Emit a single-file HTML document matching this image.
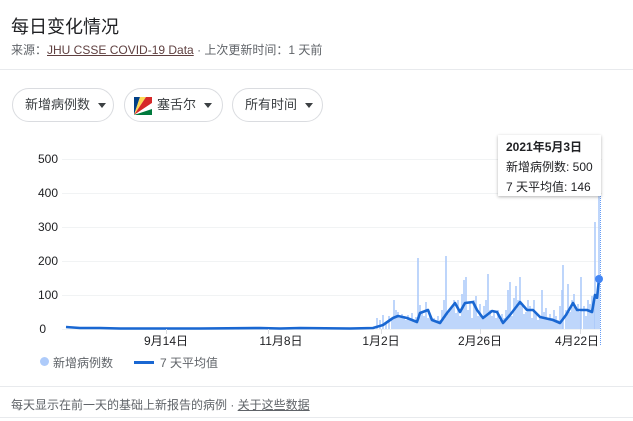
<!DOCTYPE html>
<html><head><meta charset="utf-8"><style>
body{margin:0;width:633px;height:421px;background:#fff;font-family:"Liberation Sans","Noto Sans CJK SC",sans-serif;color:#202124;position:relative;overflow:hidden}
.a{position:absolute;white-space:nowrap}
.chip{position:absolute;top:88px;height:32px;border:1px solid #dadce0;border-radius:17px;font-size:13px;line-height:32px;color:#3c4043}
.tri{display:inline-block;width:0;height:0;border-left:4px solid transparent;border-right:4px solid transparent;border-top:5px solid #3c4043;vertical-align:middle;margin-left:8px}
</style></head><body>
<div class="a" style="left:11px;top:13px;font-size:18px">每日变化情况</div>
<div class="a" style="left:11px;top:41px;font-size:12px;color:#5f6368">来源：<span style="color:#70757a;text-decoration:underline;color:#5f4040">JHU CSSE COVID-19 Data</span> · 上次更新时间：1 天前</div>
<div class="a" style="left:0;top:69px;width:633px;height:1px;background:#e8eaed"></div>
<div class="chip" style="left:12px;width:100px"><span style="margin-left:12px">新增病例数</span><span class="tri"></span></div>
<div class="chip" style="left:124px;width:97px"><svg style="position:absolute;left:9px;top:8px" width="18" height="18" viewBox="0 0 18 18"><polygon points="0,18 0,0 6,0" fill="#003f87"/><polygon points="0,18 6,0 12,0" fill="#fcd856"/><polygon points="0,18 12,0 18,0 18,6" fill="#d62828"/><polygon points="0,18 18,6 18,12" fill="#fff"/><polygon points="0,18 18,12 18,18" fill="#007a3d"/></svg><span style="margin-left:32px">塞舌尔</span><span class="tri"></span></div>
<div class="chip" style="left:232px;width:89px"><span style="margin-left:12px">所有时间</span><span class="tri"></span></div>

<svg class="a" style="left:0;top:0" width="633" height="421">
<g stroke="#f1f3f4" stroke-width="1"><line x1="62" x2="602" y1="159.5" y2="159.5"/><line x1="62" x2="602" y1="193.5" y2="193.5"/><line x1="62" x2="602" y1="227.5" y2="227.5"/><line x1="62" x2="602" y1="261.5" y2="261.5"/><line x1="62" x2="602" y1="295.5" y2="295.5"/><line x1="62" x2="602" y1="329.5" y2="329.5"/></g>
<g font-size="12" fill="#202124" text-anchor="end"><text x="58" y="163">500</text><text x="58" y="197">400</text><text x="58" y="231">300</text><text x="58" y="265">200</text><text x="58" y="299">100</text><text x="46" y="333">0</text></g>
<path stroke="#aecbfa" stroke-width="1.6" fill="none" d="M377 329V318M380 329V320M383 329V315M386 329V322M389 329V316M392 329V318M394 329V300M396 329V310M398 329V312M400 329V318M402 329V314M404 329V316M406 329V320M408 329V315M410 329V318M412 329V313M414 329V321M416 329V317M418 329V258M420 329V305M422 329V312M424 329V316M426 329V302M428 329V318M430 329V314M432 329V320M434 329V318M436 329V322M438 329V316M440 329V320M442 329V310M444 329V300M446 329V256M448 329V312M450 329V310M452 329V306M454 329V300M456 329V313M458 329V300M460 329V316M462 329V294M464 329V280M466 329V277M468 329V310M470 329V302M472 329V318M474 329V300M476 329V296M478 329V316M480 329V304M482 329V318M484 329V306M486 329V300M488 329V274M490 329V310M492 329V316M494 329V312M496 329V318M498 329V310M500 329V320M502 329V314M504 329V318M506 329V310M508 329V290M510 329V282M512 329V316M514 329V298M516 329V286M518 329V300M520 329V277M522 329V306M524 329V314M526 329V312M528 329V300M530 329V306M532 329V318M534 329V300M536 329V312M538 329V320M540 329V316M542 329V290M544 329V312M546 329V308M548 329V320M550 329V314M552 329V318M554 329V310M556 329V316M558 329V320M560 329V306M562 329V290M563 329V265M566 329V310M568 329V284M570 329V312M572 329V300M574 329V294M576 329V310M578 329V304M580 329V312M581 329V277M584 329V306M586 329V316M588 329V300M590 329V304M592 329V296M594 329V298M595 329V222M597 329V300M599 329V162"/>
<path stroke="#1967d2" stroke-width="2.6" fill="none" stroke-linejoin="round" d="M66 327L80 328L100 328L120 328.5L200 328.5L260 328L280 328.5L300 328L350 328.5L373 328L383 325L393 318L398 316L407 318L417 322L420 313L428 310L432 320L440 323L447 313L455 303L460 312L465 303L473 302L477 310L483 318L492 311L497 312L503 323L510 315L520 302L527 310L533 310L540 317L553 320L560 323L566 315L573 303L577 310L587 310L592 312L595 295L597 298L599 279"/>
<line x1="600.5" x2="600.5" y1="160" y2="346" stroke="#669df6" stroke-width="1" stroke-dasharray="1,1"/>
<circle cx="599" cy="279" r="4" fill="#4285f4"/>
<g stroke="#dadce0"><line x1="166.5" x2="166.5" y1="329" y2="334"/><line x1="268.5" x2="268.5" y1="329" y2="334"/><line x1="381.5" x2="381.5" y1="329" y2="334"/><line x1="480.5" x2="480.5" y1="329" y2="334"/><line x1="580.5" x2="580.5" y1="329" y2="334"/></g>
<g font-size="12" fill="#202124" text-anchor="middle"><text x="166" y="345">9月14日</text><text x="281" y="345">11月8日</text><text x="381" y="345">1月2日</text><text x="480" y="345">2月26日</text><text x="577" y="345">4月22日</text></g>
</svg>
<div class="a" style="left:498px;top:135px;width:103px;height:61px;background:#fff;box-shadow:0 1px 3px rgba(0,0,0,.3);font-size:12px;line-height:20px;padding:2px 0 0 8px;box-sizing:border-box"><b>2021年5月3日</b><br>新增病例数: 500<br>7 天平均值: 146</div>
<div class="a" style="left:40px;top:357px;width:9px;height:9px;border-radius:50%;background:#aecbfa"></div>
<div class="a" style="left:53px;top:354px;font-size:12px;color:#5f6368">新增病例数</div>
<div class="a" style="left:134px;top:361px;width:20px;height:3px;background:#1967d2"></div>
<div class="a" style="left:160px;top:354px;font-size:12px;color:#5f6368">7 天平均值</div>
<div class="a" style="left:0;top:386px;width:633px;height:1px;background:#e8eaed"></div>
<div class="a" style="left:11px;top:396px;font-size:12px;color:#5f6368">每天显示在前一天的基础上新报告的病例 · <span style="text-decoration:underline">关于这些数据</span></div>
<div class="a" style="left:0;top:417px;width:633px;height:1px;background:#e8eaed"></div>
</body></html>
